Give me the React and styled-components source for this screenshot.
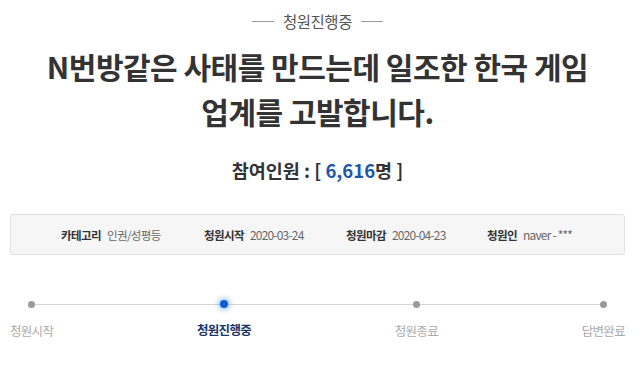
import React from "react";
import styled, { createGlobalStyle } from "styled-components";

const Global = createGlobalStyle`
  html, body { margin: 0; padding: 0; background: #fff; }
  body { font-family: "Noto Sans CJK KR", "Noto Sans", sans-serif; color: #333; }
`;

const Page = styled.div`
  padding: 10px 14px 0 10px;
  display: flex;
  flex-direction: column;
`;

const Status = styled.div`
  display: flex;
  justify-content: center;
  align-items: center;
  gap: 9px;
  height: 22px;
  font-size: 15.5px;
  color: #555;
  letter-spacing: -0.5px;
  &::before, &::after {
    content: "";
    width: 22px;
    height: 1px;
    background: #999;
  }
`;

const Title = styled.h1`
  margin: 12px 0 0;
  text-align: center;
  font-size: 30px;
  line-height: 45px;
  font-weight: 700;
  color: #333;
  letter-spacing: -0.5px;
`;

const Count = styled.div`
  margin-top: 24px;
  text-align: center;
  font-size: 18.5px;
  line-height: 24px;
  font-weight: 700;
  color: #333;
  letter-spacing: 0;
`;

const Num = styled.span`
  color: #1a58a8;
`;

const InfoBox = styled.div`
  margin-top: 32px;
  height: 39px;
  border: 1px solid #e1e1e1;
  border-radius: 3px;
  background: #f6f6f6;
  display: flex;
  align-items: center;
  padding-left: 50px;
`;

const InfoItem = styled.div`
  display: flex;
  align-items: center;
  gap: 6px;
  width: ${(p) => p.$w}px;
  font-size: 11.5px;
  letter-spacing: -0.6px;
`;

const Label = styled.span`
  font-weight: 700;
  color: #333;
`;

const Value = styled.span`
  color: #666;
  font-size: ${(p) => (p.$narrow ? "12px" : "11.5px")};
  letter-spacing: ${(p) => (p.$narrow ? "-0.8px" : "-0.6px")};
`;

const Steps = styled.div`
  position: relative;
  margin-top: 45px;
  display: flex;
  justify-content: space-between;
  &::before {
    content: "";
    position: absolute;
    left: 19px;
    right: 21px;
    top: 4px;
    height: 1px;
    background: #d4d4d4;
  }
`;

const Step = styled.div`
  display: flex;
  flex-direction: column;
  align-items: center;
  gap: 13px;
`;

const Dot = styled.span`
  position: relative;
  width: ${(p) => (p.$active ? 8 : 7)}px;
  height: ${(p) => (p.$active ? 8 : 7)}px;
  margin-top: ${(p) => (p.$active ? 0 : 1)}px;
  margin-bottom: ${(p) => (p.$active ? 0 : 1)}px;
  border-radius: 50%;
  background: ${(p) => (p.$active ? "#0a5ccf" : "#9a9a9a")};
  box-shadow: ${(p) => (p.$active ? "0 0 4px 3px rgba(60,140,240,0.35)" : "none")};
`;

const StepLabel = styled.span`
  font-size: 12.5px;
  line-height: 18px;
  letter-spacing: -0.7px;
  color: ${(p) => (p.$active ? "#1b3566" : "#aaa")};
  font-weight: ${(p) => (p.$active ? 700 : 400)};
`;

const steps = ["청원시작", "청원진행중", "청원종료", "답변완료"];

export default function App() {
  return (
    <>
      <Global />
      <Page>
        <Status>청원진행중</Status>
        <Title>
          N번방같은 사태를 만드는데 일조한 한국 게임
          <br />
          업계를 고발합니다.
        </Title>
        <Count>
          참여인원 : [ <Num>6,616</Num>명 ]
        </Count>
        <InfoBox>
          <InfoItem $w={143}>
            <Label>카테고리</Label>
            <Value>인권/성평등</Value>
          </InfoItem>
          <InfoItem $w={142}>
            <Label>청원시작</Label>
            <Value $narrow>2020-03-24</Value>
          </InfoItem>
          <InfoItem $w={141}>
            <Label>청원마감</Label>
            <Value $narrow>2020-04-23</Value>
          </InfoItem>
          <InfoItem $w={120}>
            <Label>청원인</Label>
            <Value $narrow>naver - ***</Value>
          </InfoItem>
        </InfoBox>
        <Steps>
          {steps.map((s, i) => (
            <Step key={s}>
              <Dot $active={i === 1} />
              <StepLabel $active={i === 1}>{s}</StepLabel>
            </Step>
          ))}
        </Steps>
      </Page>
    </>
  );
}
